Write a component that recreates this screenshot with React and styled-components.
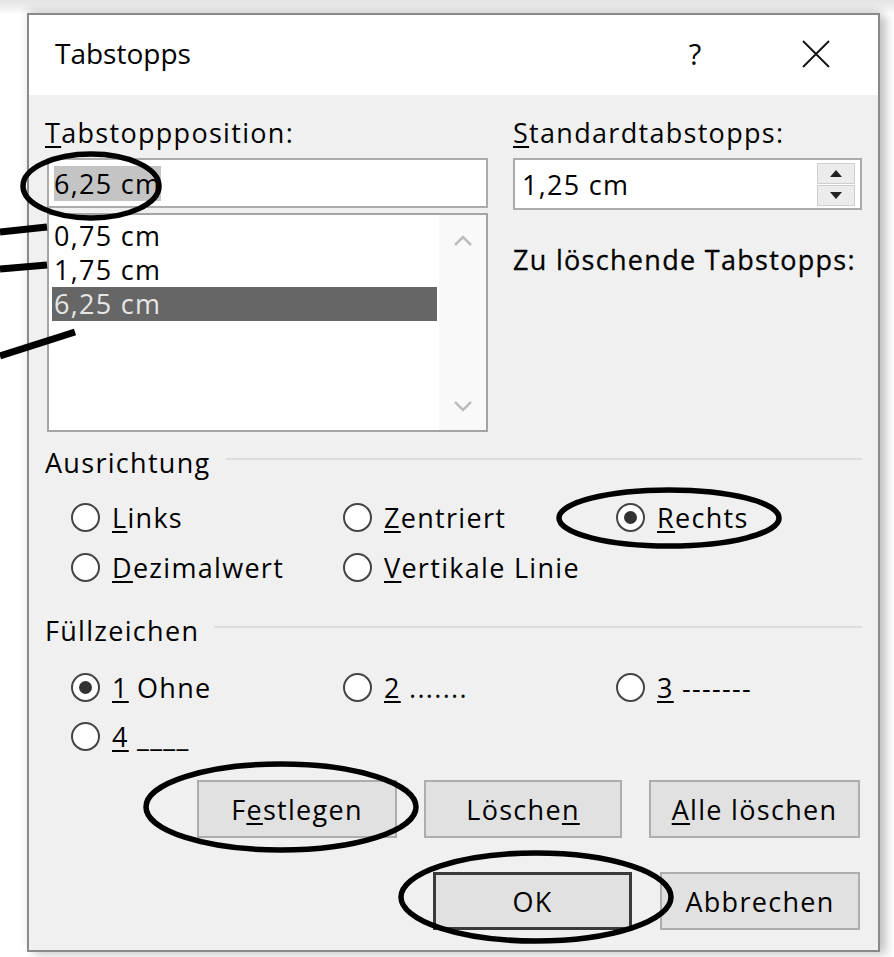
import React from "react";
import styled, { createGlobalStyle } from "styled-components";

const GlobalStyle = createGlobalStyle`
  html, body {
    margin: 0;
    padding: 0;
    background: #fff;
  }
  body {
    font-family: "Open Sans", "Noto Sans", sans-serif;
    color: #000;
  }
`;

const Page = styled.div`
  position: relative;
  width: 894px;
  height: 957px;
  box-sizing: border-box;
  padding: 13px 0 0 27px;
  overflow: hidden;
  background: linear-gradient(#e4e4e4, #f4f4f4 10px, #fff 14px);
`;

const Dialog = styled.div`
  width: 853px;
  height: 939px;
  box-sizing: border-box;
  border: 2px solid #8a8a8a;
  background: #f0f0f0;
  display: flex;
  flex-direction: column;
  box-shadow: 0 -5px 9px rgba(0, 0, 0, 0.1), 7px 3px 9px rgba(0, 0, 0, 0.2);
`;

const TitleBar = styled.div`
  height: 80px;
  flex: none;
  background: #fff;
  display: flex;
  align-items: center;
  padding-left: 26px;
`;

const Title = styled.div`
  flex: 1;
  font-size: 28px;
  line-height: 34px;
  margin-top: -4px;
`;

const HelpGlyph = styled.div`
  width: 40px;
  text-align: center;
  font-size: 29px;
  margin-top: -4px;
`;

const CloseGlyph = styled.div`
  width: 60px;
  margin: -2px 32px 0 71px;
  display: flex;
  justify-content: center;
`;

/* dialog controls use a slightly tracked-out face */
const Body = styled.div`
  flex: 1;
  padding: 23px 16px 20px 16px;
  display: flex;
  flex-direction: column;
  font-size: 27px;
  letter-spacing: 1.3px;
`;

const TopGrid = styled.div`
  display: grid;
  grid-template-columns: 443px 1fr;
  column-gap: 25px;
`;

const Column = styled.div`
  display: flex;
  flex-direction: column;
`;

const Label = styled.div`
  line-height: 30px;
  height: 30px;
  margin-bottom: 10px;
  white-space: nowrap;
`;

const Key = styled.span`
  text-decoration: underline;
  text-decoration-thickness: 2px;
  text-underline-offset: 3px;
`;

const TextBox = styled.div`
  height: 50px;
  box-sizing: border-box;
  margin-left: 2px;
  border: 2px solid #ababab;
  background: #fff;
  display: flex;
  align-items: center;
  padding-left: 5px;
`;

const Selection = styled.span`
  background: #c4c4c4;
  line-height: 35px;
`;

const ListBox = styled.div`
  height: 219px;
  box-sizing: border-box;
  margin: 5px 0 0 2px;
  border: 2px solid #a5a5a5;
  background: #fff;
  display: flex;
`;

const Items = styled.div`
  flex: 1;
  padding: 4px 2px 0 3px;
`;

const Item = styled.div`
  height: 34px;
  line-height: 34px;
  padding-left: 2px;
  background: ${(p) => (p.selected ? "#666" : "transparent")};
  color: ${(p) => (p.selected ? "#e6e6e6" : "#000")};
`;

const ScrollTrack = styled.div`
  width: 47px;
  background: #f9f9f9;
  display: flex;
  flex-direction: column;
  justify-content: space-between;
  align-items: center;
  padding: 20px 0 18px;
`;

const SpinBox = styled.div`
  height: 52px;
  box-sizing: border-box;
  border: 2px solid #ababab;
  background: #fff;
  display: flex;
  align-items: center;
  padding-left: 7px;
`;

const SpinValue = styled.div`
  flex: 1;
`;

const SpinButtons = styled.div`
  width: 38px;
  height: 43px;
  margin-right: 5px;
  display: flex;
  flex-direction: column;
  gap: 1px;
`;

const SpinButton = styled.div`
  flex: 1;
  background: #ececec;
  border: 1px solid #cfcfcf;
  display: flex;
  align-items: center;
  justify-content: center;
`;

const DeleteLabel = styled.div`
  margin-top: 35px;
  line-height: 30px;
  white-space: nowrap;
  -webkit-text-stroke: 0.3px #000;
`;

const GroupHeading = styled.div`
  display: flex;
  align-items: center;
  margin-top: ${(p) => p.gap}px;
  height: 30px;
`;

const GroupRule = styled.div`
  flex: 1;
  height: 2px;
  margin: 0 0 6px 15px;
  background: #dcdcdc;
`;

const RadioGrid = styled.div`
  display: grid;
  grid-template-columns: 272px 273px 1fr;
  grid-auto-rows: ${(p) => p.row}px;
  margin-top: ${(p) => p.gap}px;
  padding-left: 26px;
`;

const RadioItem = styled.div`
  display: flex;
  align-items: center;
  white-space: nowrap;
`;

const RadioCircle = styled.span`
  width: 29px;
  height: 29px;
  flex: none;
  box-sizing: border-box;
  border-radius: 50%;
  border: 2px solid #444;
  background: #fff;
  margin-right: 12px;
  display: flex;
  align-items: center;
  justify-content: center;
  &::after {
    content: "";
    width: 13px;
    height: 13px;
    border-radius: 50%;
    background: ${(p) => (p.checked ? "#333" : "transparent")};
  }
`;

const ButtonRow = styled.div`
  display: flex;
  justify-content: flex-end;
  gap: ${(p) => p.spacing}px;
  margin-top: ${(p) => p.gap}px;
  padding-right: 2px;
`;

const Button = styled.div`
  width: ${(p) => p.w}px;
  height: 58px;
  box-sizing: border-box;
  background: #e1e1e1;
  border: ${(p) => (p.primary ? "3px solid #3a3a3a" : "2px solid #adadad")};
  display: flex;
  align-items: center;
  justify-content: center;
`;

const Marks = styled.svg`
  position: absolute;
  left: 0;
  top: 0;
  pointer-events: none;
`;

const Chevron = ({ up }) => (
  <svg width="20" height="12" viewBox="0 0 20 12">
    <path
      d={up ? "M2 10 L10 2 L18 10" : "M2 2 L10 10 L18 2"}
      fill="none"
      stroke="#bdbdbd"
      strokeWidth="2.5"
    />
  </svg>
);

const Triangle = ({ up }) => (
  <svg width="12" height="7" viewBox="0 0 12 7">
    <path d={up ? "M0 7 L6 0 L12 7 Z" : "M0 0 L6 7 L12 0 Z"} fill="#222" />
  </svg>
);

const Radio = ({ checked, children }) => (
  <RadioItem>
    <RadioCircle checked={checked} />
    <span>{children}</span>
  </RadioItem>
);

const stops = ["0,75 cm", "1,75 cm", "6,25 cm"];

export default function App() {
  return (
    <Page>
      <GlobalStyle />
      <Dialog>
        <TitleBar>
          <Title>Tabstopps</Title>
          <HelpGlyph>?</HelpGlyph>
          <CloseGlyph>
            <svg width="28" height="28" viewBox="0 0 28 28">
              <path d="M1 1 L27 27 M27 1 L1 27" stroke="#111" strokeWidth="1.8" />
            </svg>
          </CloseGlyph>
        </TitleBar>

        <Body>
          <TopGrid>
            <Column>
              <Label>
                <Key>T</Key>abstoppposition:
              </Label>
              <TextBox>
                <Selection>6,25 cm</Selection>
              </TextBox>
              <ListBox>
                <Items>
                  {stops.map((s, i) => (
                    <Item key={s} selected={i === stops.length - 1}>
                      {s}
                    </Item>
                  ))}
                </Items>
                <ScrollTrack>
                  <Chevron up />
                  <Chevron />
                </ScrollTrack>
              </ListBox>
            </Column>

            <Column>
              <Label>
                <Key>S</Key>tandardtabstopps:
              </Label>
              <SpinBox>
                <SpinValue>1,25 cm</SpinValue>
                <SpinButtons>
                  <SpinButton>
                    <Triangle up />
                  </SpinButton>
                  <SpinButton>
                    <Triangle />
                  </SpinButton>
                </SpinButtons>
              </SpinBox>
              <DeleteLabel>Zu löschende Tabstopps:</DeleteLabel>
            </Column>
          </TopGrid>

          <GroupHeading gap={15}>
            Ausrichtung
            <GroupRule />
          </GroupHeading>
          <RadioGrid gap={15} row={50}>
            <Radio>
              <Key>L</Key>inks
            </Radio>
            <Radio>
              <Key>Z</Key>entriert
            </Radio>
            <Radio checked>
              <Key>R</Key>echts
            </Radio>
            <Radio>
              <Key>D</Key>ezimalwert
            </Radio>
            <Radio>
              <Key>V</Key>ertikale Linie
            </Radio>
          </RadioGrid>

          <GroupHeading gap={23}>
            Füllzeichen
            <GroupRule />
          </GroupHeading>
          <RadioGrid gap={18} row={49}>
            <Radio checked>
              <Key>1</Key> Ohne
            </Radio>
            <Radio>
              <Key>2</Key> .......
            </Radio>
            <Radio>
              <Key>3</Key> -------
            </Radio>
            <Radio>
              <Key>4</Key> ____
            </Radio>
          </RadioGrid>

          <ButtonRow gap={19} spacing={27}>
            <Button w={200}>
              <span>
                F<Key>e</Key>stlegen
              </span>
            </Button>
            <Button w={198}>
              <span>
                Lösche<Key>n</Key>
              </span>
            </Button>
            <Button w={211}>
              <span>
                <Key>A</Key>lle löschen
              </span>
            </Button>
          </ButtonRow>
          <ButtonRow gap={34} spacing={28}>
            <Button w={199} primary>
              OK
            </Button>
            <Button w={200}>Abbrechen</Button>
          </ButtonRow>
        </Body>
      </Dialog>

      <Marks width="894" height="957" viewBox="0 0 894 957">
        <g fill="none" stroke="#000" strokeWidth="5.5">
          <ellipse cx="91" cy="186" rx="68" ry="32" />
          <ellipse cx="669" cy="518" rx="110" ry="28" />
          <ellipse cx="281" cy="807" rx="135" ry="43" />
          <ellipse cx="536" cy="897" rx="135" ry="44" />
        </g>
        <g stroke="#000" strokeWidth="7" strokeLinecap="butt">
          <line x1="0" y1="232" x2="47" y2="227" />
          <line x1="0" y1="269" x2="47" y2="265" />
          <line x1="0" y1="356" x2="75" y2="332" />
        </g>
      </Marks>
    </Page>
  );
}
